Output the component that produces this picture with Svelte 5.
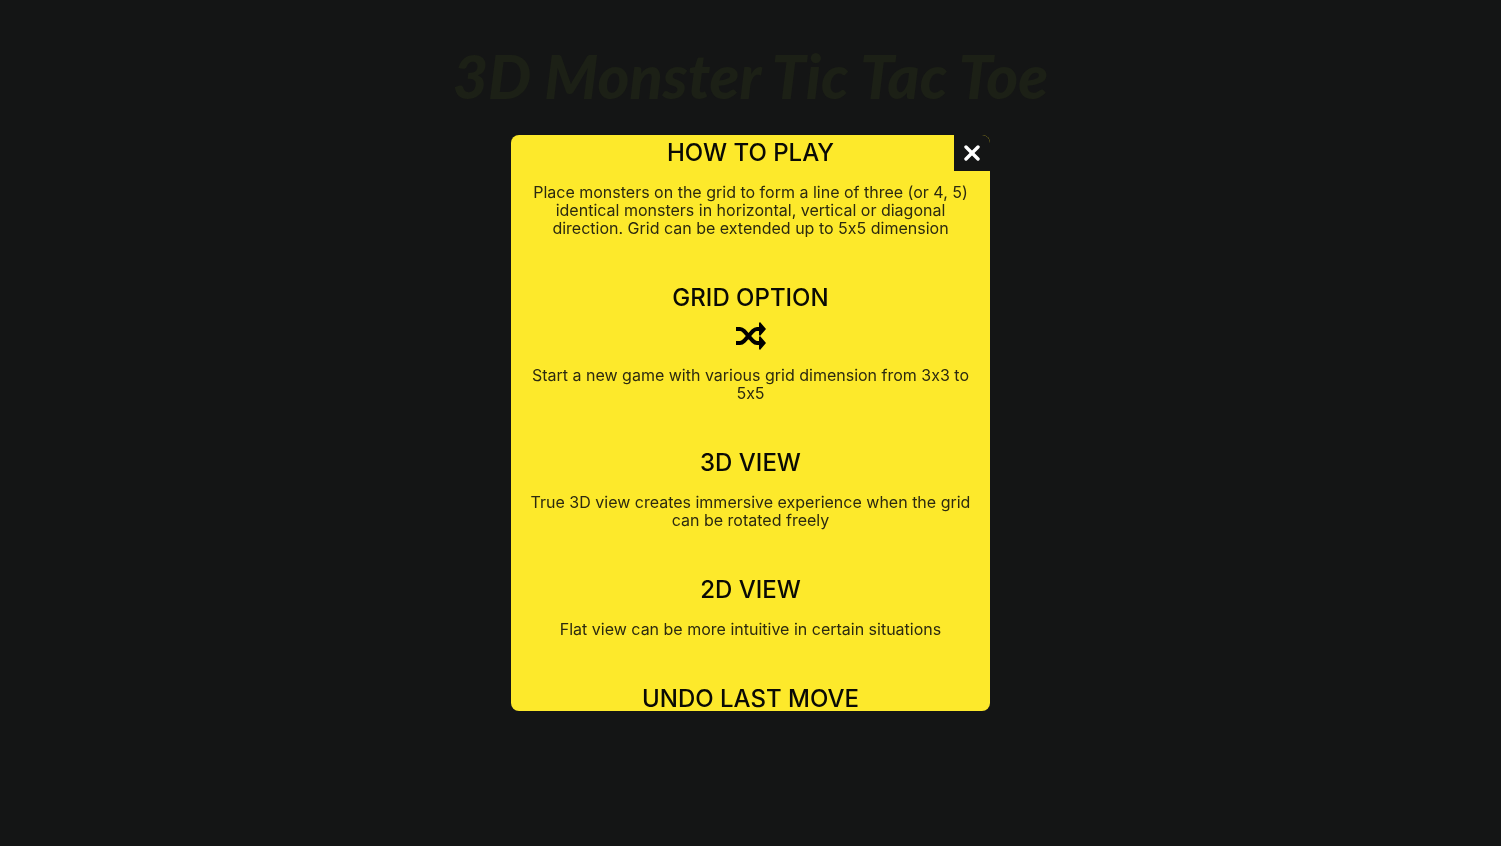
<script>
    let open = $state(true);

    const sections = [
        {
            title: 'HOW TO PLAY',
            text: 'Place monsters on the grid to form a line of three (or 4, 5) identical monsters in horizontal, vertical or diagonal direction. Grid can be extended up to 5x5 dimension'
        },
        {
            title: 'GRID OPTION',
            icon: 'shuffle',
            text: 'Start a new game with various grid dimension from 3x3 to 5x5'
        },
        {
            title: '3D VIEW',
            text: 'True 3D view creates immersive experience when the grid can be rotated freely'
        },
        {
            title: '2D VIEW',
            text: 'Flat view can be more intuitive in certain situations'
        },
        { title: 'UNDO LAST MOVE' }
    ];
</script>

<main class="game">
    <h1 class="game-title">3D Monster Tic Tac Toe</h1>
</main>

{#if open}
    <div class="backdrop">
        <div class="modal" role="dialog" aria-modal="true" aria-label="How to play">
            <div class="modal-content">
                {#each sections as section}
                    <section>
                        <h2>{section.title}</h2>
                        {#if section.icon === 'shuffle'}
                            <svg class="icon" viewBox="0 0 30 28" aria-hidden="true">
                                <path d="M0 7H4Q6 7 8 9L17 19Q19 21 21 21H25M0 21H4Q6 21 8 19L17 9Q19 7 21 7H25" fill="none" stroke="currentColor" stroke-width="4" />
                                <path d="M23 1L24 0L30 7L24 14L23 13ZM23 15L24 14L30 21L24 28L23 27Z" fill="currentColor" />
                            </svg>
                        {/if}
                        {#if section.text}
                            <p>{section.text}</p>
                        {/if}
                    </section>
                {/each}
            </div>
            <button class="modal-close" aria-label="Close" onclick={() => (open = false)}>
                <svg width="16" height="16" viewBox="0 0 16 16" fill="none" stroke="currentColor" stroke-width="3.4" stroke-linecap="round">
                    <line x1="2" y1="2" x2="14" y2="14"></line>
                    <line x1="14" y1="2" x2="2" y2="14"></line>
                </svg>
            </button>
        </div>
    </div>
{/if}

<style>
    :global(body) {
        background: #141515;
        font-family: Inter, sans-serif;
    }

    .game {
        min-height: 100vh;
        box-sizing: border-box;
        padding: 36px 16px;
        text-align: center;
    }

    .game-title {
        margin: 0;
        color: #1c2016;
        font-family: Lato, sans-serif;
        font-size: 61px;
        font-style: italic;
        font-weight: 900;
        line-height: 80px;
    }

    .backdrop {
        position: fixed;
        inset: 0;
        display: flex;
        align-items: center;
        justify-content: center;
    }

    .modal {
        position: relative;
        width: calc(32% - 1px);
        min-width: 300px;
        height: 68%;
        border-radius: 8px;
        overflow: hidden;
        background: #fde92b;
    }

    .modal-content {
        height: 100%;
        box-sizing: border-box;
        padding: 6px 16px 0;
        overflow-y: auto;
        scrollbar-width: none;
        text-align: center;
    }

    section {
        margin-bottom: 49px;
    }

    h2 {
        margin: 0;
        color: #0a0a05;
        font-size: 24px;
        font-weight: 500;
        line-height: 24px;
    }

    .icon {
        display: block;
        width: 30px;
        height: 28px;
        margin: 12px auto -2px;
        color: #000;
    }

    p {
        margin: 18px 0 0;
        color: #2c2a10;
        font-size: 16px;
        /* keeps "3x3" from turning into a multiplication sign */
        font-feature-settings: 'calt' 0;
        line-height: 18px;
    }

    .modal-close {
        position: absolute;
        top: 0;
        right: 0;
        width: 36px;
        height: 36px;
        display: flex;
        align-items: center;
        justify-content: center;
        padding: 0;
        border: none;
        background: #141515;
        color: #fff;
        cursor: pointer;
    }
</style>
